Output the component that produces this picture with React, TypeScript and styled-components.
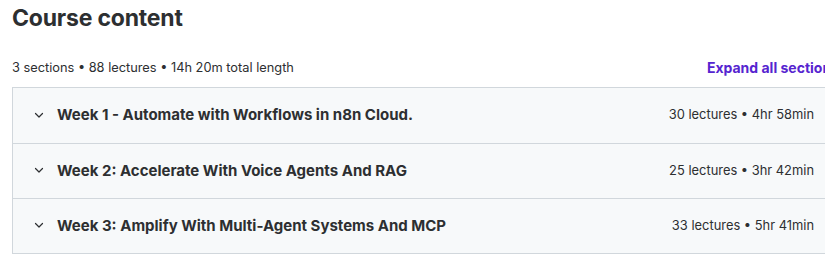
import React from "react";
import styled, { createGlobalStyle } from "styled-components";

const Global = createGlobalStyle`
  html, body { margin: 0; padding: 0; background: #fff; overflow: hidden; }
  body { font-family: Inter, "Noto Sans", sans-serif; color: #2d2f31; }
`;

const Page = styled.div`
  width: 827px;
  padding: 0 0 0 12px;
`;

const Title = styled.h2`
  margin: 0;
  padding-top: 2px;
  font-size: 23px;
  line-height: 32px;
  font-weight: 700;
  letter-spacing: -0.2px;
  color: #2d2f31;
`;

const SummaryBar = styled.div`
  display: flex;
  justify-content: space-between;
  align-items: center;
  margin-top: 19px;
  height: 28px;
  margin-bottom: 6px;
`;

const Summary = styled.span`
  font-size: 12.8px;
  color: #2d2f31;
`;

const ExpandLink = styled.button`
  border: 0;
  background: none;
  padding: 0;
  font-family: inherit;
  font-size: 14px;
  font-weight: 700;
  color: #5624d0;
  cursor: pointer;
`;

const Sections = styled.div`
  border: 1px solid #d1d7dc;
`;

const SectionRow = styled.div<{ $first?: boolean }>`
  display: flex;
  align-items: center;
  height: 55px;
  padding: 0 24px 2px 20px;
  box-sizing: border-box;
  background: #f7f9fa;
  border-top: ${(p) => (p.$first ? "0" : "1px solid #d1d7dc")};
`;

const Chevron = styled.svg`
  width: 12px;
  height: 12px;
  margin: 0 12px 0 0;
  flex-shrink: 0;
`;

const SectionTitle = styled.span`
  flex: 1;
  font-size: 15px;
  font-weight: 700;
  color: #2d2f31;
`;

const SectionMeta = styled.span`
  font-size: 12.9px;
  color: #2d2f31;
`;

const sections = [
  { title: "Week 1 - Automate with Workflows in n8n Cloud.", meta: "30 lectures • 4hr 58min" },
  { title: "Week 2: Accelerate With Voice Agents And RAG", meta: "25 lectures • 3hr 42min" },
  { title: "Week 3: Amplify With Multi-Agent Systems And MCP", meta: "33 lectures • 5hr 41min" },
];

export default function App() {
  return (
    <Page>
      <Global />
      <Title>Course content</Title>
      <SummaryBar>
        <Summary>3 sections • 88 lectures • 14h 20m total length</Summary>
        <ExpandLink>Expand all sections</ExpandLink>
      </SummaryBar>
      <Sections>
        {sections.map((s, i) => (
          <SectionRow key={s.title} $first={i === 0}>
            <Chevron viewBox="0 0 12 12" fill="none">
              <path d="M2.5 4.5 L6 8 L9.5 4.5" stroke="#2d2f31" strokeWidth="1.2" strokeLinecap="round" strokeLinejoin="round" />
            </Chevron>
            <SectionTitle>{s.title}</SectionTitle>
            <SectionMeta>{s.meta}</SectionMeta>
          </SectionRow>
        ))}
      </Sections>
    </Page>
  );
}
